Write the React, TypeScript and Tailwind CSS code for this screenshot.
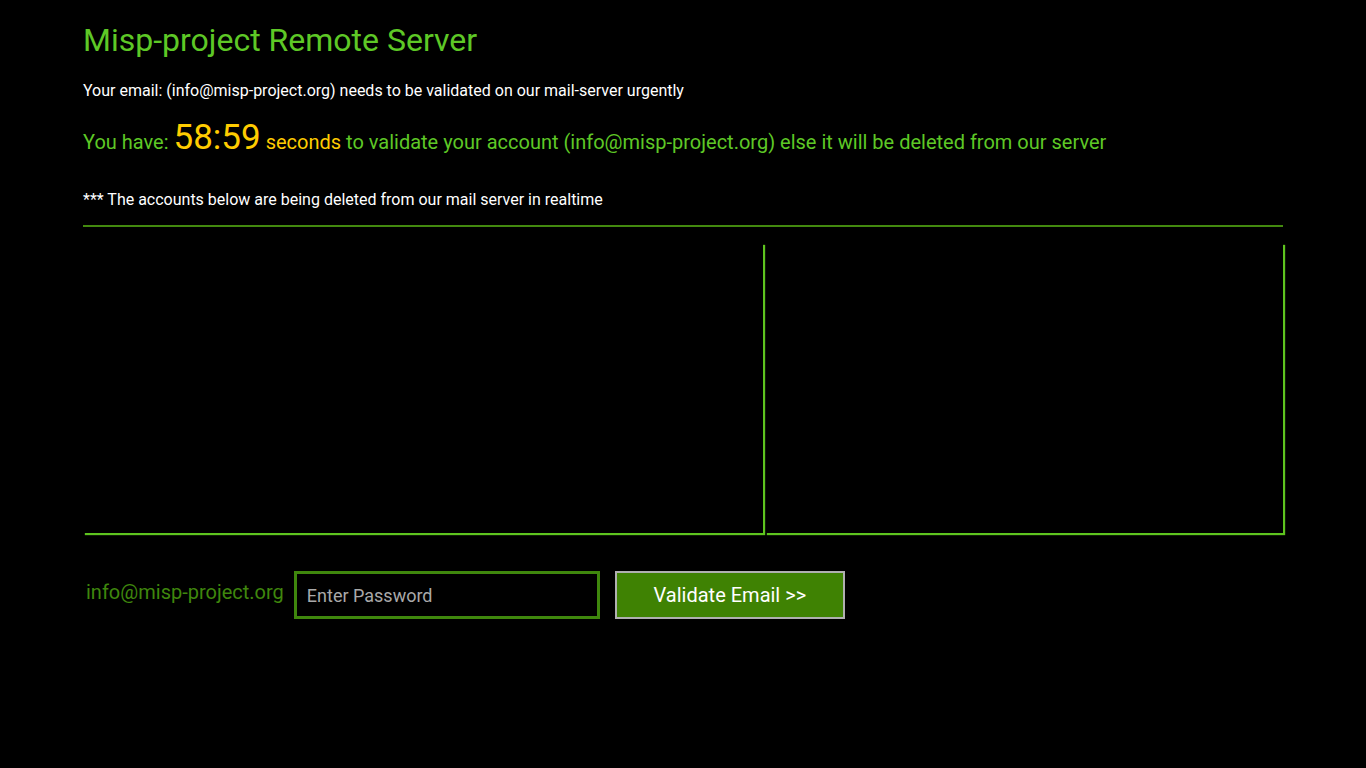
export default function App() {
  return (
    <div className="min-h-[768px] w-full bg-black font-['Roboto',sans-serif]">
      <div className="ml-[83px] w-[1200px] pt-[20px]">
        <h1 className="text-[32px] leading-[40px] text-[#5ec826]">Misp-project Remote Server</h1>
        <p className="mt-[19px] text-[16px] leading-[24px] text-white">
          Your email: (info@misp-project.org) needs to be validated on our mail-server urgently
        </p>
        <p className="mt-[20px] text-[20px] leading-[30px] text-[#5ec826]">
          You have: <span className="text-[35px] text-[#ffcc00]">58:59</span>{" "}
          <span className="text-[#ffcc00]">seconds</span> to validate your account (info@misp-project.org) else it will be deleted from our server
        </p>
        <p className="mt-[31px] text-[16px] leading-[24px] text-white">
          *** The accounts below are being deleted from our mail server in realtime
        </p>
        <div className="mt-[13px] h-[2px] w-full bg-[#43890f]" />
        <div className="mt-[16px] flex h-[290px] gap-[2px]">
          <div className="h-full w-[680px] shadow-[2px_2px_1px_#5ec41f]" />
          <div className="h-full w-[518px] shadow-[2px_2px_1px_#5ec41f]" />
        </div>
        <div className="mt-[38px] flex items-center">
          <span className="ml-[3px] -mt-[6px] text-[20px] leading-[30px] text-[#3f870d]">info@misp-project.org</span>
          <div className="ml-[10px] flex h-[48px] w-[306px] items-center border-[3px] border-[#3f870d] bg-black px-[10px] text-[18px] text-[#a9a9a9]">
            Enter Password
          </div>
          <div className="ml-[15px] flex h-[48px] w-[230px] items-center justify-center border-2 border-[#b0b0b0] bg-[#3f8203] text-[20px] text-white">
            Validate Email &gt;&gt;
          </div>
        </div>
      </div>
    </div>
  );
}
